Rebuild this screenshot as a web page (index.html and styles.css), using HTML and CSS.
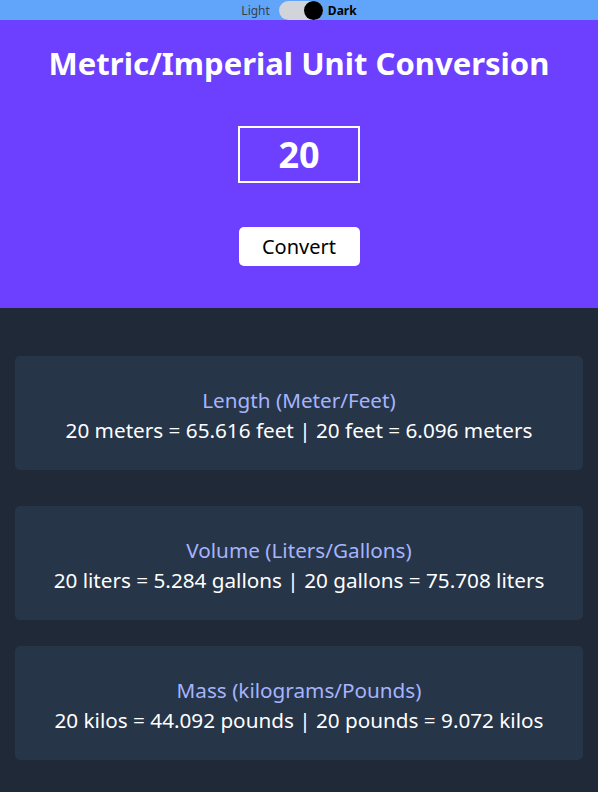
FILE: index.html
```html
<!DOCTYPE html>
<html lang="en">
<head>
    <meta charset="UTF-8">
    <meta name="viewport" content="width=device-width, initial-scale=1.0">
    <title>Unit Conversion</title>
    <link rel="stylesheet" href="styles.css">
</head>
<body>
    <!-- Theme Toggle -->
    <div class="theme-bar">
        <span class="theme-label">Light</span>
        <span class="toggle"><span class="knob"></span></span>
        <span class="theme-label active">Dark</span>
    </div>

    <!-- Input Section -->
    <section class="hero">
        <h1>Metric/Imperial Unit Conversion</h1>
        <input type="text" class="value-input" value="20">
        <button class="convert-btn">Convert</button>
    </section>

    <!-- Results -->
    <main class="results">
        <div class="card">
            <h2>Length (Meter/Feet)</h2>
            <p>20 meters = 65.616 feet | 20 feet = 6.096 meters</p>
        </div>
        <div class="card">
            <h2>Volume (Liters/Gallons)</h2>
            <p>20 liters = 5.284 gallons | 20 gallons = 75.708 liters</p>
        </div>
        <div class="card last">
            <h2>Mass (kilograms/Pounds)</h2>
            <p>20 kilos = 44.092 pounds | 20 pounds = 9.072 kilos</p>
        </div>
    </main>
</body>
</html>
```

FILE: styles.css
```css
body {
    font-family: "Noto Sans", "Open Sans", sans-serif;
    margin: 0;
    padding: 0;
    background-color: #1f2937;
}
.theme-bar {
    display: flex;
    justify-content: center;
    align-items: center;
    height: 20px;
    background-color: #60a5fa;
    font-size: 12px;
}
.theme-label {
    color: #374151;
}
.theme-label.active {
    color: #000;
    font-weight: bold;
    margin-left: 5px;
}
.toggle {
    display: flex;
    justify-content: flex-end;
    width: 44px;
    height: 19px;
    margin-left: 9px;
    background-color: #d1d5db;
    border-radius: 10px;
}
.knob {
    width: 19px;
    height: 19px;
    background-color: #000;
    border-radius: 50%;
}
.hero {
    display: flex;
    flex-direction: column;
    align-items: center;
    background-color: #6d3ffe;
    padding: 21px 0 42px;
}
.hero h1 {
    margin: 0;
    color: white;
    font-size: 31px;
    line-height: 44px;
}
.value-input {
    width: 122px;
    height: 57px;
    box-sizing: border-box;
    margin-top: 41px;
    border: 2px solid white;
    background: transparent;
    color: white;
    font-family: inherit;
    font-size: 36px;
    font-weight: bold;
    text-align: center;
    outline: none;
}
.convert-btn {
    width: 121px;
    height: 39px;
    margin-top: 44px;
    background-color: white;
    color: black;
    border: none;
    border-radius: 5px;
    font-family: inherit;
    font-size: 20px;
    cursor: pointer;
}
.results {
    display: flex;
    flex-direction: column;
    gap: 36px;
    padding: 48px 15px;
}
.card {
    background-color: #273549;
    border-radius: 5px;
    padding: 29px 10px 25px;
    text-align: center;
}
.card.last {
    margin-top: -10px;
}
.card h2 {
    margin: 0;
    color: #a5b4fc;
    font-size: 20.7px;
    font-weight: normal;
    line-height: 30px;
}
.card p {
    margin: 0;
    color: white;
    font-size: 20.7px;
    line-height: 30px;
}
```
